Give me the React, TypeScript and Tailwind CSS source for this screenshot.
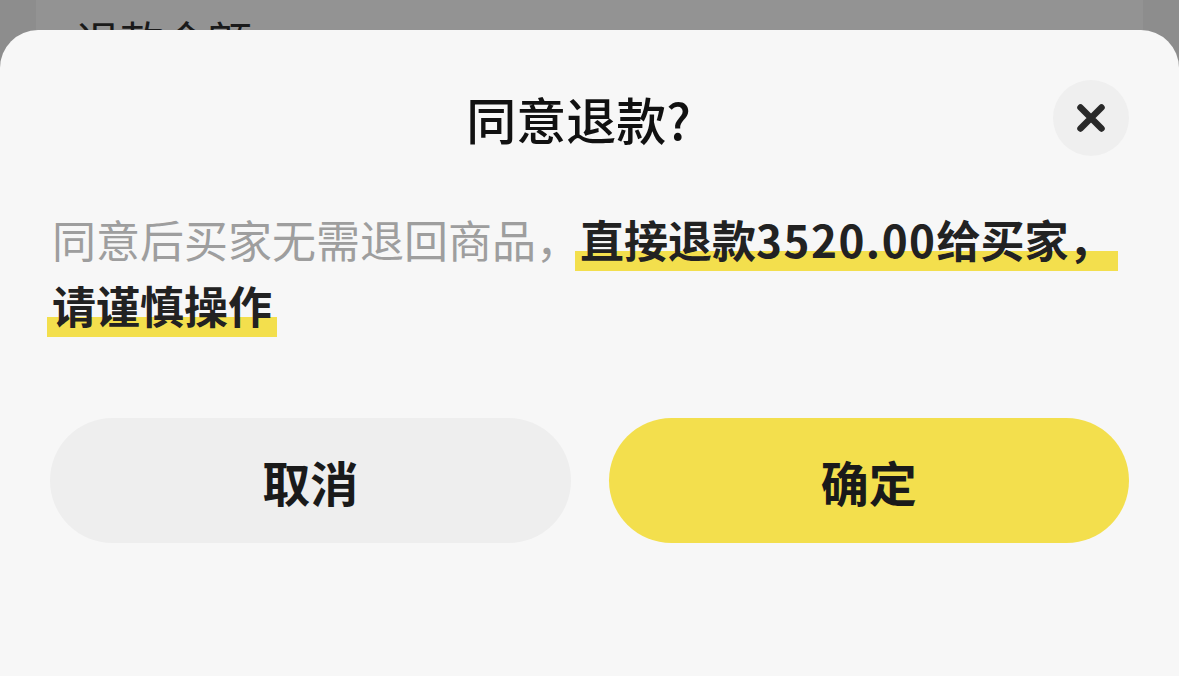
export default function App() {
  return (
    <div className="flex h-[676px] w-full flex-col overflow-hidden bg-[#8d8d8d] font-['Noto_Sans_CJK_SC',sans-serif]">
      {/* page behind the sheet, mostly covered */}
      <div className="mx-[36px] h-[30px] shrink-0 overflow-hidden bg-[#939393] pl-[40px] pt-[7px]">
        <p className="text-[44px] leading-[66px] text-[#1a1a1a]">退款金额</p>
      </div>

      <div className="flex flex-1 flex-col rounded-t-[38px] bg-[#f7f7f7] px-[50px] pt-[50px]">
        <div className="grid h-[76px] grid-cols-[76px_1fr_76px] items-center">
          <div />
          <h2 className="pr-[22px] text-center text-[50px] font-medium leading-[60px] text-[#111]">同意退款?</h2>
          <button className="flex h-[76px] w-[76px] items-center justify-center rounded-full bg-[#efefef]">
            <svg width="28" height="28" viewBox="0 0 28 28" fill="none">
              <path d="M3.5 3.5L24.5 24.5M24.5 3.5L3.5 24.5" stroke="#2a2a2a" strokeWidth="6.5" strokeLinecap="round" />
            </svg>
          </button>
        </div>

        <p className="mt-[50px] pl-[2px] text-[44px] leading-[66px] text-[#9e9e9e]">
          同意后买家无需退回商品，
          <span className="-mx-[5px] bg-[linear-gradient(to_bottom,transparent_44px,#f3df4d_44px)] px-[5px] font-semibold text-[#222]">
            直接退款<span className="tracking-[1.5px]">3520.00</span>给买家，
          </span>
          <span className="-mx-[5px] bg-[linear-gradient(to_bottom,transparent_44px,#f3df4d_44px)] px-[5px] font-semibold text-[#222]">
            请谨慎操作
          </span>
        </p>

        <div className="mt-[80px] grid grid-cols-2 gap-[38px]">
          <button className="h-[125px] rounded-full bg-[#eeeeee] text-[48px] font-semibold text-[#1a1a1a]">取消</button>
          <button className="h-[125px] rounded-full bg-[#f3df4d] text-[48px] font-semibold text-[#1a1a1a]">确定</button>
        </div>
      </div>
    </div>
  );
}
